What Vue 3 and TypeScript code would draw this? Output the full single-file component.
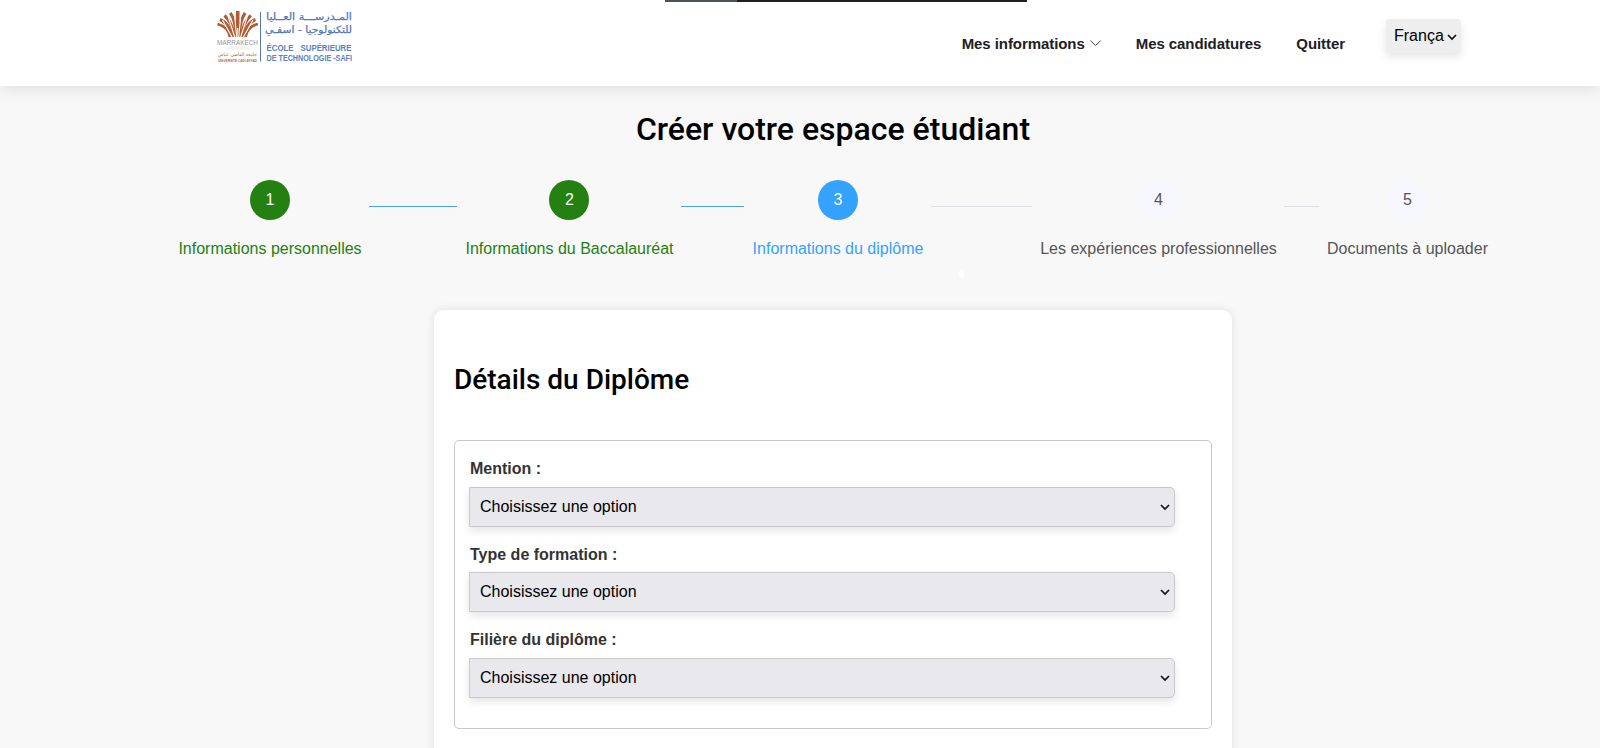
<script setup lang="ts">
interface Step {
  label: string
  state: 'done' | 'active' | 'todo'
}

const steps: Step[] = [
  { label: 'Informations personnelles', state: 'done' },
  { label: 'Informations du Baccalauréat', state: 'done' },
  { label: 'Informations du diplôme', state: 'active' },
  { label: 'Les expériences professionnelles', state: 'todo' },
  { label: 'Documents à uploader', state: 'todo' },
]

const fields: string[] = ['Mention :', 'Type de formation :', 'Filière du diplôme :']
</script>

<template>
  <div class="page">
    <header class="header">
      <div class="top-strip"></div>
      <svg class="logo" viewBox="0 0 160 60" width="160" height="60">
        <g fill="none" stroke="#b45a32" stroke-linecap="butt">
          <path d="M14 27C13 21 9 16 1.500 14" stroke-width="2.800" />
          <path d="M16 27C15 19 10 12 4 9.500" stroke-width="3" />
          <path d="M18 27C17.500 18 13 9 8.500 5.500" stroke-width="3.100" />
          <path d="M20 27C20 17 18 8 14.300 2.800" stroke-width="3.100" />
          <path d="M21.700 18V1" stroke-width="3.600" />
          <path d="M23.400 27C23.400 17 25.400 8 29.100 2.800" stroke-width="3.100" />
          <path d="M25.400 27C25.900 18 30.400 9 34.900 5.500" stroke-width="3.100" />
          <path d="M27.400 27C28.400 19 33.400 12 39.400 9.500" stroke-width="3" />
          <path d="M29.400 27C30.400 21 34.400 16 41.900 14" stroke-width="2.800" />
        </g>
        <g fill="none" stroke="#fff" stroke-width="1.100">
          <path d="M16.500 28L6.500 10M19 28L12 6M20.800 28L18.500 5M22.600 28L24.900 5M24.400 28L31.400 6M26.900 28L36.900 10" />
        </g>
        <g font-family="Liberation Sans, Arial, sans-serif">
          <text x="1" y="34.800" font-size="7" fill="#99928f" textLength="41" lengthAdjust="spacingAndGlyphs">MARRAKECH</text>
          <path d="M15 37H29M10 39H34" stroke="#e4ddda" stroke-width=".7" />
          <text x="2" y="46" font-size="5" fill="#b06a48" font-family="DejaVu Sans, sans-serif" textLength="39" lengthAdjust="spacingAndGlyphs">جامعة القاضي عياض</text>
          <text x="2" y="51.800" font-size="4" font-weight="bold" fill="#b4663f" textLength="39" lengthAdjust="spacingAndGlyphs">UNIVERSITE CADI AYYAD</text>
          <path d="M44.500 2V51.500" stroke="#5478bb" stroke-width="1" />
          <g fill="#5277bb" stroke="#5277bb" stroke-width=".25" font-family="DejaVu Sans, sans-serif">
            <text x="50" y="10" font-size="10" textLength="86" lengthAdjust="spacingAndGlyphs">المـدرســـة العــليا</text>
            <text x="49" y="23" font-size="10" textLength="87" lengthAdjust="spacingAndGlyphs">للتكنولوجيا - اسفـي</text>
          </g>
          <g fill="#5c80c0" font-weight="bold">
            <text x="50.500" y="41" font-size="9.500" textLength="27" lengthAdjust="spacingAndGlyphs">ÉCOLE</text>
            <text x="84.500" y="41" font-size="9.500" textLength="51" lengthAdjust="spacingAndGlyphs">SUPÉRIEURE</text>
            <text x="50.500" y="51.200" font-size="9" textLength="85.500" lengthAdjust="spacingAndGlyphs">DE TECHNOLOGIE -SAFI</text>
          </g>
        </g>
      </svg>
      <nav class="nav">
        <a class="nav-link">
          <span>Mes informations</span>
          <svg class="nav-chevron" width="11" height="7" viewBox="0 0 11 7">
            <path d="M.5 .7L5.500 5.500L10.500 .7" fill="none" stroke="#4c3c3a" stroke-width="1" />
          </svg>
        </a>
        <a class="nav-link">Mes candidatures</a>
        <a class="nav-link">Quitter</a>
      </nav>
      <div class="language">
        <span>França</span>
        <svg width="10" height="7" viewBox="0 0 10 7">
          <path d="M1 1L5 5L9 1" fill="none" stroke="#111" stroke-width="1.700" />
        </svg>
      </div>
    </header>

    <main class="main">
      <h1 class="title">Créer votre espace étudiant</h1>
      <div class="steps">
        <template v-for="(step, i) in steps" :key="step.label">
          <div v-if="i > 0" class="line" :class="{ reached: step.state !== 'todo' }"></div>
          <div class="step" :class="step.state">
            <div class="circle">{{ i + 1 }}</div>
            <div class="step-label">{{ step.label }}</div>
          </div>
        </template>
        <span class="dot"></span>
      </div>

      <section class="card">
        <h2 class="card-title">Détails du Diplôme</h2>
        <div class="fieldset">
          <div v-for="field in fields" :key="field" class="field">
            <div class="field-label">{{ field }}</div>
            <div class="select">
              <span>Choisissez une option</span>
              <svg width="10" height="7" viewBox="0 0 10 7">
                <path d="M1 1L5 5L9 1" fill="none" stroke="#111" stroke-width="1.700" />
              </svg>
            </div>
          </div>
        </div>
      </section>
    </main>
  </div>
</template>

<style>
body {
  margin: 0;
  overflow: hidden;
}
</style>

<style scoped>
.page {
  height: 748px;
  overflow: hidden;
  background: #f8f8f8;
  font-family: 'Liberation Sans', Arial, sans-serif;
  font-size: 16px;
  color: #000;
}
.header {
  position: relative;
  box-sizing: border-box;
  height: 86px;
  padding: 10px 139px 0 216px;
  display: flex;
  align-items: flex-start;
  background: #fff;
  box-shadow: 0 0 18px rgba(0, 0, 0, 0.14);
}
.top-strip {
  position: absolute;
  top: 0;
  left: 665px;
  width: 362px;
  height: 2px;
  background: linear-gradient(to right, #4b5557 72px, #211e1f 72px);
}
.logo {
  flex: none;
  overflow: visible;
}
.nav {
  display: flex;
  gap: 35px;
  margin-left: auto;
  padding-top: 25px;
}
.nav-link {
  display: flex;
  align-items: center;
  font-size: 15px;
  line-height: 18px;
  letter-spacing: -0.07px;
  font-weight: bold;
  color: #212025;
  white-space: nowrap;
}
.nav-chevron {
  margin: -2px 0 0 5px;
}
.language {
  box-sizing: border-box;
  display: flex;
  align-items: center;
  justify-content: space-between;
  width: 75px;
  height: 34px;
  margin: 9px 0 0 41px;
  padding: 0 4px 0 8px;
  border-radius: 4px;
  background: #eee;
  box-shadow: 0 4px 8px rgba(0, 0, 0, 0.1);
}
.language svg {
  margin-top: 2px;
}
.title {
  margin: 0;
  padding: 24px 0 0 66px;
  text-align: center;
  font: 500 32px/38px Roboto, sans-serif;
}
.steps {
  position: relative;
  display: grid;
  grid-template-columns: 199px 88px 224px 63px 187px 101px 252px 35px 176px;
  margin: 32px 0 0 170px;
  height: 130px;
}
.step {
  display: flex;
  flex-direction: column;
  align-items: center;
  color: #555;
}
.circle {
  box-sizing: border-box;
  width: 40px;
  height: 40px;
  padding-left: 1px;
  border-radius: 50%;
  background: #f7f7ff;
  text-align: center;
  line-height: 39px;
}
.step-label {
  margin-top: 20px;
  padding-left: 1px;
  line-height: 18px;
  white-space: nowrap;
}
.done {
  color: #238011;
}
.done .circle {
  background: #238011;
  color: #fff;
}
.active {
  color: #35a2ff;
}
.active .circle {
  background: #35a2ff;
  color: #fff;
}
.line {
  height: 1px;
  margin-top: 26px;
  background: #dedee5;
}
.line.reached {
  background: #4ba2f7;
}
.dot {
  position: absolute;
  left: 788px;
  top: 91px;
  width: 6px;
  height: 6px;
  border-radius: 50%;
  background: #fff;
}
.card {
  box-sizing: border-box;
  width: 798px;
  height: 500px;
  margin-left: 434px;
  padding: 51px 20px 0;
  border-radius: 10px;
  background: #fff;
  box-shadow: 0 0 10px rgba(0, 0, 0, 0.1);
}
.card-title {
  margin: 0;
  font: 500 28px/38px Roboto, sans-serif;
}
.fieldset {
  box-sizing: border-box;
  height: 289px;
  margin-top: 41px;
  padding: 19px 36px 0 14px;
  border: 1px solid #c9c9cb;
  border-radius: 5px;
}
.field {
  height: 85.4px;
}
.field-label {
  box-sizing: border-box;
  height: 27px;
  padding: 0.15px 0 0 1px;
  line-height: 18px;
  font-weight: bold;
  color: #333;
}
.select {
  box-sizing: border-box;
  display: flex;
  align-items: center;
  justify-content: space-between;
  height: 40px;
  padding: 0 4px 0 10px;
  border: 1px solid #c9c9cb;
  border-radius: 0 5px 5px 0;
  background: #e8e8ed;
  box-shadow: 0 4px 8px rgba(0, 0, 0, 0.1);
}
.select svg {
  margin-top: 1px;
}
</style>
